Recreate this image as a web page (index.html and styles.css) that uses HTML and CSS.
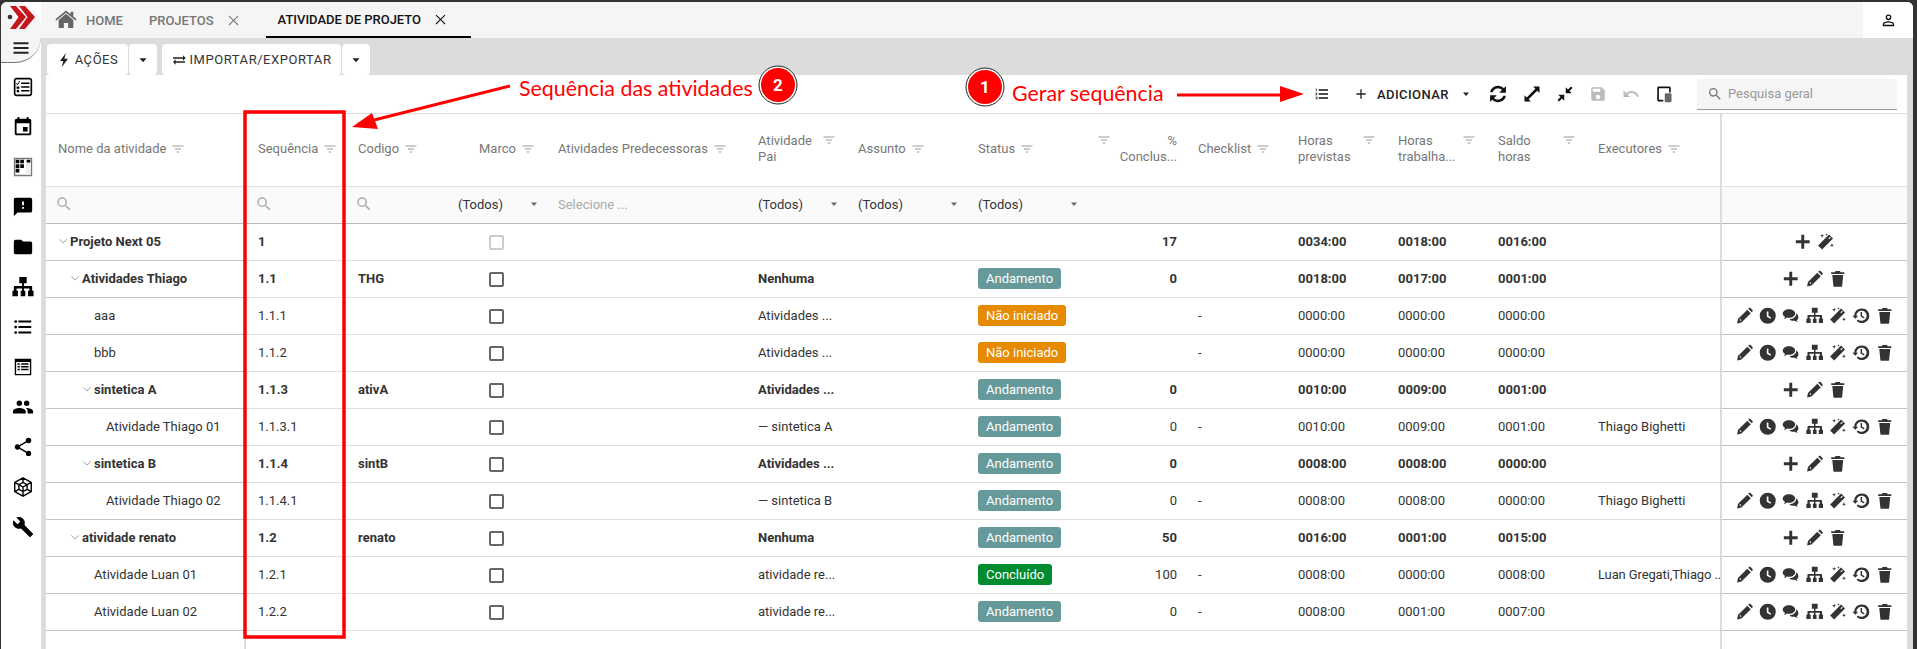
FILE: index.html
```html
<!DOCTYPE html>
<html lang="pt-BR">
<head>
    <meta charset="UTF-8">
    <meta name="viewport" content="width=device-width, initial-scale=1.0">
    <title>Atividade de Projeto</title>
    <link rel="stylesheet" href="styles.css">
</head>
<body>
    <!-- icon set -->
    <svg class="defs" aria-hidden="true">
        <symbol id="i-menu" viewBox="0 0 24 24"><path d="M3 19h18v-2.400H3zm0-5.800h18v-2.400H3zM3 5v2.400h18V5z"/></symbol>
        <symbol id="i-home" viewBox="0 0 24 24"><path d="M12 5.200 4 12v8c0 .4.3.7.7.7h5v-5.500h4.600v5.500h5c.4 0 .7-.3.7-.7v-8zM23.600 11.200 20 8.200V3h-3v2.700L12 1.600.4 11.200l1.200 1.400L12 4l10.400 8.600z"/></symbol>
        <symbol id="i-close" viewBox="0 0 24 24"><path d="M21 4.400 19.600 3 12 10.600 4.400 3 3 4.400 10.600 12 3 19.600 4.400 21 12 13.400 19.600 21 21 19.600 13.400 12z"/></symbol>
        <symbol id="i-flash" viewBox="0 0 24 24"><path d="M15 1 6 13.500h5L8.500 23 18 10h-5.500z"/></symbol>
        <symbol id="i-swap" viewBox="0 0 24 24"><path d="M7 11l-4 4 4 4v-3h14v-2H7zM22 9l-4-4v3H3v2h15v3z"/></symbol>
        <symbol id="i-numbered" viewBox="0 0 24 24"><path d="M2 17h2v.5H3v1h1v.5H2v1h3v-4H2zm1-9h1V4H2v1h1zm-1 3h1.800L2 13.100v.9h3v-1H3.200L5 10.900V10H2zm5-6v2h14V5zm0 14h14v-2H7zm0-6h14v-2H7z"/></symbol>
        <symbol id="i-add" viewBox="0 0 24 24"><path d="M19 13h-6v6h-2v-6H5v-2h6V5h2v6h6z"/></symbol>
        <symbol id="i-sync" viewBox="0 0 24 24"><path d="M12 2c2.800 0 5.300 1.100 7 3L21.500 2.500V10.500h-8L16.700 7.300A6.600 6.600 0 0 0 5.600 10H2.500A9.800 9.800 0 0 1 12 2zM2.500 13.500h8L7.300 16.700a6.600 6.600 0 0 0 11.100-2.700h3.100A9.800 9.800 0 0 1 5 19l-2.500 2.500z"/></symbol>
        <symbol id="i-expand" viewBox="0 0 24 24"><path d="M22 2h-8.500l3 3L5 16.500l-3-3V22h8.500l-3-3L19 7.500l3 3z"/></symbol>
        <symbol id="i-compress" viewBox="0 0 24 24"><path d="M13 3v8h8l-3-3 4-4-2-2-4 4zM11 21v-8H3l3 3-4 4 2 2 4-4z"/></symbol>
        <symbol id="i-save" viewBox="0 0 24 24"><path d="M17 3H5c-1.100 0-2 .9-2 2v14c0 1.100.9 2 2 2h14c1.100 0 2-.9 2-2V7zm-5 16c-1.700 0-3-1.300-3-3s1.300-3 3-3 3 1.300 3 3-1.300 3-3 3zm3-10H5V5h10z"/></symbol>
        <symbol id="i-undo" viewBox="0 0 24 24"><path d="M12.500 8c-2.650 0-5.050 1-6.900 2.600L2 7v9h9l-3.620-3.620c1.390-1.160 3.160-1.880 5.120-1.880 3.540 0 6.550 2.310 7.600 5.500l2.370-.78C21.080 11.030 17.150 8 12.500 8z"/></symbol>
        <symbol id="i-columns" viewBox="0 0 24 24"><path d="M5 2h14c1.100 0 2 .9 2 2v6h-2.200V4.200H5.200v15.600H11V22H5c-1.100 0-2-.9-2-2V4c0-1.100.9-2 2-2z"/><rect fill="#666" x="13" y="11" width="9" height="12" rx="1.500"/></symbol>
        <symbol id="i-search" viewBox="0 0 24 24"><path d="M15.500 14h-.79l-.28-.27A6.470 6.470 0 0 0 16 9.500 6.500 6.500 0 1 0 9.500 16c1.610 0 3.090-.59 4.230-1.570l.27.28v.79l5 4.990L20.490 19zm-6 0A4.490 4.490 0 0 1 5 9.500 4.490 4.490 0 0 1 9.500 5 4.490 4.490 0 0 1 14 9.500 4.490 4.490 0 0 1 9.500 14z"/></symbol>
        <symbol id="i-person" viewBox="0 0 24 24"><path d="M12 3.500a4 4 0 1 1 0 8 4 4 0 0 1 0-8zm0 1.900a2.100 2.100 0 1 0 0 4.200 2.100 2.100 0 0 0 0-4.200zM12 13c2.700 0 8 1.300 8 4v3H4v-3c0-2.700 5.300-4 8-4zm0 1.900c-3 0-6.100 1.500-6.100 2.100v1.100h12.200V17c0-.6-3.100-2.100-6.100-2.100z"/></symbol>
        <symbol id="i-filter" viewBox="0 0 24 24"><path d="M1 5h22v1.800H1zM6 11h12v1.800H6zM9.500 17h5v1.800h-5z"/></symbol>
        <symbol id="i-caret" viewBox="0 0 24 24"><path d="M6 9h12l-6 7z"/></symbol>
        <symbol id="i-chevron" viewBox="0 0 24 24"><path d="M3 8l9 9 9-9" fill="none" stroke="currentColor" stroke-width="2.200"/></symbol>
        <symbol id="i-checklist" viewBox="0 0 24 24"><path d="M5 2h14c1.700 0 3 1.300 3 3v14c0 1.700-1.300 3-3 3H5c-1.700 0-3-1.300-3-3V5c0-1.700 1.300-3 3-3zm0 1.800C4.300 3.800 3.800 4.300 3.800 5v14c0 .7.5 1.200 1.200 1.200h14c.7 0 1.200-.5 1.200-1.200V5c0-.7-.5-1.200-1.200-1.200z"/><path d="M10 7h9v1.800h-9zM10 11.100h9v1.800h-9zM10 15.200h9v1.800h-9zM5 7.500l1 1.200L8 5.500l.8.6-2.700 4L4.300 8.200zM5 11.500h3V14H5zM6.500 15a1.500 1.500 0 1 1 0 3 1.500 1.500 0 0 1 0-3z"/></symbol>
        <symbol id="i-event" viewBox="0 0 24 24"><path d="M17 12h-5v5h5zM16 1v2H8V1H6v2H5c-1.100 0-2 .9-2 2v14c0 1.100.9 2 2 2h14c1.100 0 2-.9 2-2V5c0-1.100-.9-2-2-2h-1V1zm3 18H5V8h14z"/></symbol>
        <symbol id="i-kanban" viewBox="0 0 24 24"><path fill="#777" d="M2 2h20v20H2z"/><path fill="#fff" d="M3.500 3.500h17v17h-17z"/><path fill="#eee" d="M15 3.500h5.500v17H15z"/><path d="M4 4h4v4H4zM9 4h4v4H9zM16 4h4v3h-4zM4 9h4v4H4zM9 9h4v4H9zM4 14h4v4H4z"/></symbol>
        <symbol id="i-sms" viewBox="0 0 24 24"><path d="M20 2H4C2.900 2 2 2.900 2 4v18l4-4h14c1.100 0 2-.9 2-2V4c0-1.100-.9-2-2-2zm-7 12h-2v-2h2zm0-4h-2V6h2z"/></symbol>
        <symbol id="i-folder" viewBox="0 0 24 24"><path d="M10 4H4C2.900 4 2 4.900 2 6v12c0 1.100.9 2 2 2h16c1.100 0 2-.9 2-2V8c0-1.100-.9-2-2-2h-8z"/></symbol>
        <symbol id="i-sitemap" viewBox="0 0 24 24"><path d="M8 1h8v7h-3v3h8c.6 0 1 .4 1 1v4h1.500v6h-6v-6H19v-2.500h-6V16h1.500v6h-5v-6H11v-2.500H5V16h1.500v6h-6v-6H2v-4c0-.6.4-1 1-1h8V8H8z"/></symbol>
        <symbol id="i-list" viewBox="0 0 24 24"><circle cx="4" cy="6" r="1.500"/><circle cx="4" cy="12" r="1.500"/><circle cx="4" cy="18" r="1.500"/><path d="M7 19h14v-2H7zm0-6h14v-2H7zm0-8v2h14V5z"/></symbol>
        <symbol id="i-listalt" viewBox="0 0 24 24"><path d="M3 3h18v18H3zm1.500 3.500v13h15v-13z"/><path d="M6 8h2.500v1.500H6zM10 8h8v1.500h-8zM6 11h2.500v1.500H6zM10 11h8v1.500h-8zM6 14h2.500v1.500H6zM10 14h8v1.500h-8z"/></symbol>
        <symbol id="i-people" viewBox="0 0 24 24"><path d="M16 11a3 3 0 1 0 0-6 3 3 0 0 0 0 6zm-8 0a3 3 0 1 0 0-6 3 3 0 0 0 0 6zm0 2c-2.330 0-7 1.170-7 3.500V19h14v-2.500c0-2.330-4.670-3.500-7-3.500zm8 0c-.29 0-.62.02-.97.05 1.160.84 1.970 1.970 1.970 3.450V19h6v-2.500c0-2.330-4.670-3.500-7-3.500z"/></symbol>
        <symbol id="i-share" viewBox="0 0 24 24"><path d="M18 16.080c-.76 0-1.440.3-1.960.77L8.910 12.700c.05-.23.09-.46.09-.7s-.04-.47-.09-.7l7.050-4.110c.54.5 1.250.81 2.040.81a3 3 0 1 0-3-3c0 .24.04.47.09.7L8.040 9.810A3 3 0 1 0 6 15c.79 0 1.500-.31 2.040-.81l7.120 4.160c-.05.21-.08.43-.08.65a2.920 2.920 0 1 0 2.920-2.920z"/></symbol>
        <symbol id="i-cube" viewBox="0 0 24 24"><path fill="none" stroke="currentColor" stroke-width="1.500" d="M12 2l9 5v10l-9 5-9-5V7zM12 2v5M3 7l4.500 2.500M21 7l-4.500 2.500M7.500 9.500 12 7l4.500 2.500v5L12 17l-4.500-2.500zM12 12l4.500-2.500M12 12 7.500 9.500M12 12v5M3 17l4.500-2.500M21 17l-4.500-2.500M12 22v-5"/></symbol>
        <symbol id="i-wrench" viewBox="0 0 24 24"><path d="M22.700 19l-9.100-9.100c.9-2.300.4-5-1.500-6.900-2-2-5-2.400-7.400-1.300L9 6 6 9 1.600 4.700C.4 7.100.9 10.100 2.900 12.100c1.900 1.900 4.600 2.400 6.900 1.500l9.100 9.100c.4.4 1 .4 1.400 0l2.300-2.300c.5-.4.5-1.100.1-1.400z"/></symbol>
        <symbol id="i-plus" viewBox="0 0 24 24"><path d="M10 2.500h4V10h7.500v4H14v7.500h-4V14H2.500v-4H10z"/></symbol>
        <symbol id="i-edit" viewBox="0 0 24 24"><path d="M1.500 22.500l1.200-6L15.500 3.700l4.800 4.800L7.500 21.300zM4.800 17.600l1.600 1.600 1-1-1.600-1.600zM16.800 2.400l1-1c.6-.6 1.500-.6 2.100 0l2.700 2.700c.6.600.6 1.500 0 2.100l-1 1z"/></symbol>
        <symbol id="i-clock" viewBox="0 0 24 24"><path fill-rule="evenodd" d="M12 1a11 11 0 1 1 0 22 11 11 0 0 1 0-22zm-1.300 5v7.200l5 3 1-1.800-3.800-2.300V6z"/></symbol>
        <symbol id="i-comments" viewBox="0 0 24 24"><path d="M9.500 3C4.800 3 1 5.700 1 9c0 1.900 1.300 3.600 3.200 4.700-.3 1-.9 1.900-1.700 2.700 1.700-.2 3.200-.9 4.400-1.900.8.200 1.700.3 2.600.3 4.700 0 8.500-2.700 8.500-6S14.200 3 9.500 3z"/><path d="M19.400 8.600c.1.400.1.700.1 1.100 0 3.700-4.100 6.800-9.200 7 1.100 1.400 3.100 2.300 5.400 2.300.7 0 1.300-.1 1.900-.2 1.100.9 2.400 1.500 4 1.700-.7-.7-1.200-1.500-1.500-2.400 1.500-.9 2.400-2.200 2.400-3.700 0-2.500-1.200-4.700-3.100-5.800z"/></symbol>
        <symbol id="i-magic" viewBox="0 0 24 24"><path d="M16.500 2 22 7.500 7 22.500 1.500 17zM15.500 7.500l1 1 2.500-2.500-1-1z"/><path d="M7 1l.8 2 2 .8-2 .8L7 6.600l-.8-2-2-.8 2-.8zM20.500 14l.8 2 2 .8-2 .8-.8 2-.8-2-2-.8 2-.8zM13 .5l.5 1.200 1.200.5-1.200.5L13 3.900l-.5-1.200-1.200-.5 1.200-.5z"/></symbol>
        <symbol id="i-history" viewBox="0 0 24 24"><path d="M13 2a10 10 0 0 0-10 10H.5l4 4.200 4-4.200H6a7 7 0 1 1 2.100 5l-1.700 1.700A10 10 0 1 0 13 2z"/><path d="M11.800 7v6l4.500 2.700 1-1.500-3.500-2.100V7z"/></symbol>
        <symbol id="i-trash" viewBox="0 0 24 24"><path d="M4.500 7h15L18 22c0 .6-.4 1-1 1H7c-.6 0-1-.4-1-1zM3 3h5l1-1.500h6L16 3h5v2.500H3z"/></symbol>
    </svg>

    <div class="app">
        <aside class="sidebar">
            <div class="brand">
                <svg class="logo" viewBox="0 0 28 25">
                    <circle cx="3" cy="12" r="2.300" fill="#333"/>
                    <path fill="#c4161c" d="M3 1h6l10 11L9 24H3l8.500-12z"/>
                    <path fill="#c4161c" d="M12 1h6l10 11-10 12h-6l8.500-12z"/>
                </svg>
                <svg class="ic-menu"><use href="#i-menu"/></svg>
            </div>
            <nav class="side-nav">
                <a><svg><use href="#i-checklist"/></svg></a>
                <a><svg><use href="#i-event"/></svg></a>
                <a><svg><use href="#i-kanban"/></svg></a>
                <a><svg><use href="#i-sms"/></svg></a>
                <a><svg><use href="#i-folder"/></svg></a>
                <a><svg><use href="#i-sitemap"/></svg></a>
                <a><svg><use href="#i-list"/></svg></a>
                <a><svg><use href="#i-listalt"/></svg></a>
                <a><svg><use href="#i-people"/></svg></a>
                <a><svg><use href="#i-share"/></svg></a>
                <a><svg><use href="#i-cube"/></svg></a>
                <a><svg><use href="#i-wrench"/></svg></a>
            </nav>
        </aside>

        <div class="main">
            <header class="tabs">
                <div class="tab tab-home"><svg class="ic-home"><use href="#i-home"/></svg>HOME</div>
                <div class="tab">PROJETOS<svg class="ic-x"><use href="#i-close"/></svg></div>
                <div class="tab tab-active">ATIVIDADE DE PROJETO<svg class="ic-x"><use href="#i-close"/></svg></div>
                <div class="account"><svg><use href="#i-person"/></svg></div>
            </header>

            <div class="content">
                <div class="actions">
                    <button class="btn btn-acoes"><svg><use href="#i-flash"/></svg>AÇÕES</button>
                    <button class="btn btn-caret"><svg><use href="#i-caret"/></svg></button>
                    <button class="btn btn-import"><svg><use href="#i-swap"/></svg>IMPORTAR/EXPORTAR</button>
                    <button class="btn btn-caret"><svg><use href="#i-caret"/></svg></button>
                </div>

                <div class="panel">
                    <div class="toolbar">
                        <svg class="tool tool-seq"><use href="#i-numbered"/></svg>
                        <div class="add"><svg><use href="#i-add"/></svg><span>ADICIONAR</span><svg class="add-caret"><use href="#i-caret"/></svg></div>
                        <svg class="tool tool-sync"><use href="#i-sync"/></svg>
                        <svg class="tool"><use href="#i-expand"/></svg>
                        <svg class="tool"><use href="#i-compress"/></svg>
                        <svg class="tool tool-off"><use href="#i-save"/></svg>
                        <svg class="tool tool-off"><use href="#i-undo"/></svg>
                        <svg class="tool"><use href="#i-columns"/></svg>
                        <div class="global-search"><svg><use href="#i-search"/></svg>Pesquisa geral</div>
                    </div>

                    <table class="grid">
                        <colgroup>
                            <col class="c-name"><col class="c-100"><col class="c-100"><col class="c-100"><col class="c-200"><col class="c-100"><col class="c-120"><col class="c-120"><col class="c-100"><col class="c-100"><col class="c-100"><col class="c-100"><col class="c-100"><col class="c-exec"><col class="c-act">
                        </colgroup>
                        <thead>
                            <tr class="head">
                                <th class="col-fixed"><div class="th"><span>Nome da atividade</span><svg><use href="#i-filter"/></svg></div></th>
                                <th><div class="th"><span>Sequência</span><svg><use href="#i-filter"/></svg></div></th>
                                <th><div class="th"><span>Codigo</span><svg><use href="#i-filter"/></svg></div></th>
                                <th><div class="th th-marco"><span>Marco</span><svg><use href="#i-filter"/></svg></div></th>
                                <th><div class="th"><span>Atividades Predecessoras</span><svg><use href="#i-filter"/></svg></div></th>
                                <th><div class="th th-wrap"><span>Atividade<br>Pai</span><svg><use href="#i-filter"/></svg></div></th>
                                <th><div class="th"><span>Assunto</span><svg><use href="#i-filter"/></svg></div></th>
                                <th><div class="th"><span>Status</span><svg><use href="#i-filter"/></svg></div></th>
                                <th><div class="th th-wrap th-pct"><svg><use href="#i-filter"/></svg><span>%<br>Conclus...</span></div></th>
                                <th><div class="th"><span>Checklist</span><svg><use href="#i-filter"/></svg></div></th>
                                <th><div class="th th-wrap"><span>Horas<br>previstas</span><svg><use href="#i-filter"/></svg></div></th>
                                <th><div class="th th-wrap"><span>Horas<br>trabalha...</span><svg><use href="#i-filter"/></svg></div></th>
                                <th><div class="th th-wrap"><span>Saldo<br>horas</span><svg><use href="#i-filter"/></svg></div></th>
                                <th><div class="th"><span>Executores</span><svg><use href="#i-filter"/></svg></div></th>
                                <th class="col-act"></th>
                            </tr>
                            <tr class="filters">
                                <td class="col-fixed"><svg class="f-search"><use href="#i-search"/></svg></td>
                                <td><svg class="f-search"><use href="#i-search"/></svg></td>
                                <td><svg class="f-search"><use href="#i-search"/></svg></td>
                                <td><div class="f-select">(Todos)<svg><use href="#i-caret"/></svg></div></td>
                                <td class="f-hint">Selecione ...</td>
                                <td><div class="f-select">(Todos)<svg><use href="#i-caret"/></svg></div></td>
                                <td><div class="f-select">(Todos)<svg><use href="#i-caret"/></svg></div></td>
                                <td><div class="f-select">(Todos)<svg><use href="#i-caret"/></svg></div></td>
                                <td></td><td></td><td></td><td></td><td></td><td></td>
                                <td class="col-act"></td>
                            </tr>
                        </thead>
                        <tbody>
                            <tr class="sum">
                                <td class="col-fixed"><div class="name lv0"><svg class="chev"><use href="#i-chevron"/></svg>Projeto Next 05</div></td>
                                <td>1</td><td></td>
                                <td class="mark"><span class="check check-off"></span></td>
                                <td></td><td></td><td></td><td></td>
                                <td class="pct">17</td><td></td>
                                <td>0034:00</td><td>0018:00</td><td>0016:00</td><td></td>
                                <td class="col-act"><div class="acts"><svg><use href="#i-plus"/></svg><svg><use href="#i-magic"/></svg></div></td>
                            </tr>
                            <tr class="sum">
                                <td class="col-fixed"><div class="name lv1"><svg class="chev"><use href="#i-chevron"/></svg>Atividades Thiago</div></td>
                                <td>1.1</td><td>THG</td>
                                <td class="mark"><span class="check"></span></td>
                                <td></td><td>Nenhuma</td><td></td>
                                <td><span class="badge b-run">Andamento</span></td>
                                <td class="pct">0</td><td></td>
                                <td>0018:00</td><td>0017:00</td><td>0001:00</td><td></td>
                                <td class="col-act"><div class="acts"><svg><use href="#i-plus"/></svg><svg><use href="#i-edit"/></svg><svg><use href="#i-trash"/></svg></div></td>
                            </tr>
                            <tr>
                                <td class="col-fixed"><div class="name lv2">aaa</div></td>
                                <td>1.1.1</td><td></td>
                                <td class="mark"><span class="check"></span></td>
                                <td></td><td>Atividades ...</td><td></td>
                                <td><span class="badge b-new">Não iniciado</span></td>
                                <td class="pct"></td><td>-</td>
                                <td>0000:00</td><td>0000:00</td><td>0000:00</td><td></td>
                                <td class="col-act"><div class="acts"><svg><use href="#i-edit"/></svg><svg><use href="#i-clock"/></svg><svg><use href="#i-comments"/></svg><svg><use href="#i-sitemap"/></svg><svg><use href="#i-magic"/></svg><svg><use href="#i-history"/></svg><svg><use href="#i-trash"/></svg></div></td>
                            </tr>
                            <tr>
                                <td class="col-fixed"><div class="name lv2">bbb</div></td>
                                <td>1.1.2</td><td></td>
                                <td class="mark"><span class="check"></span></td>
                                <td></td><td>Atividades ...</td><td></td>
                                <td><span class="badge b-new">Não iniciado</span></td>
                                <td class="pct"></td><td>-</td>
                                <td>0000:00</td><td>0000:00</td><td>0000:00</td><td></td>
                                <td class="col-act"><div class="acts"><svg><use href="#i-edit"/></svg><svg><use href="#i-clock"/></svg><svg><use href="#i-comments"/></svg><svg><use href="#i-sitemap"/></svg><svg><use href="#i-magic"/></svg><svg><use href="#i-history"/></svg><svg><use href="#i-trash"/></svg></div></td>
                            </tr>
                            <tr class="sum">
                                <td class="col-fixed"><div class="name lv2"><svg class="chev"><use href="#i-chevron"/></svg>sintetica A</div></td>
                                <td>1.1.3</td><td>ativA</td>
                                <td class="mark"><span class="check"></span></td>
                                <td></td><td>Atividades ...</td><td></td>
                                <td><span class="badge b-run">Andamento</span></td>
                                <td class="pct">0</td><td></td>
                                <td>0010:00</td><td>0009:00</td><td>0001:00</td><td></td>
                                <td class="col-act"><div class="acts"><svg><use href="#i-plus"/></svg><svg><use href="#i-edit"/></svg><svg><use href="#i-trash"/></svg></div></td>
                            </tr>
                            <tr>
                                <td class="col-fixed"><div class="name lv3">Atividade Thiago 01</div></td>
                                <td>1.1.3.1</td><td></td>
                                <td class="mark"><span class="check"></span></td>
                                <td></td><td>— sintetica A</td><td></td>
                                <td><span class="badge b-run">Andamento</span></td>
                                <td class="pct">0</td><td>-</td>
                                <td>0010:00</td><td>0009:00</td><td>0001:00</td><td>Thiago Bighetti</td>
                                <td class="col-act"><div class="acts"><svg><use href="#i-edit"/></svg><svg><use href="#i-clock"/></svg><svg><use href="#i-comments"/></svg><svg><use href="#i-sitemap"/></svg><svg><use href="#i-magic"/></svg><svg><use href="#i-history"/></svg><svg><use href="#i-trash"/></svg></div></td>
                            </tr>
                            <tr class="sum">
                                <td class="col-fixed"><div class="name lv2"><svg class="chev"><use href="#i-chevron"/></svg>sintetica B</div></td>
                                <td>1.1.4</td><td>sintB</td>
                                <td class="mark"><span class="check"></span></td>
                                <td></td><td>Atividades ...</td><td></td>
                                <td><span class="badge b-run">Andamento</span></td>
                                <td class="pct">0</td><td></td>
                                <td>0008:00</td><td>0008:00</td><td>0000:00</td><td></td>
                                <td class="col-act"><div class="acts"><svg><use href="#i-plus"/></svg><svg><use href="#i-edit"/></svg><svg><use href="#i-trash"/></svg></div></td>
                            </tr>
                            <tr>
                                <td class="col-fixed"><div class="name lv3">Atividade Thiago 02</div></td>
                                <td>1.1.4.1</td><td></td>
                                <td class="mark"><span class="check"></span></td>
                                <td></td><td>— sintetica B</td><td></td>
                                <td><span class="badge b-run">Andamento</span></td>
                                <td class="pct">0</td><td>-</td>
                                <td>0008:00</td><td>0008:00</td><td>0000:00</td><td>Thiago Bighetti</td>
                                <td class="col-act"><div class="acts"><svg><use href="#i-edit"/></svg><svg><use href="#i-clock"/></svg><svg><use href="#i-comments"/></svg><svg><use href="#i-sitemap"/></svg><svg><use href="#i-magic"/></svg><svg><use href="#i-history"/></svg><svg><use href="#i-trash"/></svg></div></td>
                            </tr>
                            <tr class="sum">
                                <td class="col-fixed"><div class="name lv1"><svg class="chev"><use href="#i-chevron"/></svg>atividade renato</div></td>
                                <td>1.2</td><td>renato</td>
                                <td class="mark"><span class="check"></span></td>
                                <td></td><td>Nenhuma</td><td></td>
                                <td><span class="badge b-run">Andamento</span></td>
                                <td class="pct">50</td><td></td>
                                <td>0016:00</td><td>0001:00</td><td>0015:00</td><td></td>
                                <td class="col-act"><div class="acts"><svg><use href="#i-plus"/></svg><svg><use href="#i-edit"/></svg><svg><use href="#i-trash"/></svg></div></td>
                            </tr>
                            <tr>
                                <td class="col-fixed"><div class="name lv2">Atividade Luan 01</div></td>
                                <td>1.2.1</td><td></td>
                                <td class="mark"><span class="check"></span></td>
                                <td></td><td>atividade re...</td><td></td>
                                <td><span class="badge b-done">Concluído</span></td>
                                <td class="pct">100</td><td>-</td>
                                <td>0008:00</td><td>0000:00</td><td>0008:00</td><td class="exec">Luan Gregati,Thiago ..</td>
                                <td class="col-act"><div class="acts"><svg><use href="#i-edit"/></svg><svg><use href="#i-clock"/></svg><svg><use href="#i-comments"/></svg><svg><use href="#i-sitemap"/></svg><svg><use href="#i-magic"/></svg><svg><use href="#i-history"/></svg><svg><use href="#i-trash"/></svg></div></td>
                            </tr>
                            <tr>
                                <td class="col-fixed"><div class="name lv2">Atividade Luan 02</div></td>
                                <td>1.2.2</td><td></td>
                                <td class="mark"><span class="check"></span></td>
                                <td></td><td>atividade re...</td><td></td>
                                <td><span class="badge b-run">Andamento</span></td>
                                <td class="pct">0</td><td>-</td>
                                <td>0008:00</td><td>0001:00</td><td>0007:00</td><td></td>
                                <td class="col-act"><div class="acts"><svg><use href="#i-edit"/></svg><svg><use href="#i-clock"/></svg><svg><use href="#i-comments"/></svg><svg><use href="#i-sitemap"/></svg><svg><use href="#i-magic"/></svg><svg><use href="#i-history"/></svg><svg><use href="#i-trash"/></svg></div></td>
                            </tr>
                            <tr class="filler">
                                <td class="col-fixed"></td>
                                <td colspan="13"></td>
                                <td class="col-act"></td>
                            </tr>
                        </tbody>
                    </table>
                </div>
            </div>
        </div>
    </div>

    <!-- red notes drawn over the screenshot -->
    <svg class="notes" viewBox="0 0 1917 649">
        <rect class="note-box" x="245" y="112" width="99" height="525"/>
        <path class="note-line" d="M510 86 370 121"/>
        <path class="note-head" d="M352 127 372 113 378 129z"/>
        <path class="note-line" d="M1177 95H1282"/>
        <path class="note-head" d="M1304 94 1280 86V102z"/>
        <circle class="note-ring" cx="778" cy="85" r="19"/>
        <circle class="note-dot" cx="778" cy="85" r="17"/>
        <text class="note-num" x="778" y="91">2</text>
        <circle class="note-ring" cx="985" cy="87" r="19"/>
        <circle class="note-dot" cx="985" cy="87" r="17"/>
        <text class="note-num" x="985" y="93">1</text>
    </svg>
    <span class="note-text note-seq">Sequência das atividades</span>
    <span class="note-text note-gen">Gerar sequência</span>
</body>
</html>
```

FILE: styles.css
```css
* {
    box-sizing: border-box;
}
html, body {
    height: 100%;
}
body {
    margin: 0;
    padding: 2px 4px 0 1px;
    overflow: hidden;
    background-color: #333;
    font-family: Roboto, Arial, sans-serif;
    font-size: 13px;
    color: #333;
}
svg {
    fill: currentColor;
}
.defs {
    display: none;
}

.app {
    display: flex;
    height: 647px;
    overflow: hidden;
    background-color: #fff;
    border-radius: 6px 6px 0 0;
}

/* sidebar */
.sidebar {
    width: 40px;
    flex-shrink: 0;
    color: #000;
}
.brand {
    height: 61px;
    background-color: #f5f5f5;
    border-bottom: 1px solid #777;
    border-radius: 0 26px 26px 0;
    display: flex;
    flex-direction: column;
    align-items: center;
    padding-top: 3px;
}
.logo {
    width: 28px;
    height: 25px;
}
.ic-menu {
    width: 20px;
    height: 20px;
    margin-top: 8px;
    color: #222;
}
.side-nav {
    padding-top: 4px;
}
.side-nav a {
    display: flex;
    justify-content: center;
    align-items: center;
    height: 40px;
    margin-left: 3px;
}
.side-nav svg {
    width: 22px;
    height: 22px;
}

/* tabs */
.main {
    flex: 1;
    min-width: 0;
    display: flex;
    flex-direction: column;
}
.tabs {
    display: flex;
    height: 36px;
    background-color: #f5f5f5;
    font-weight: 500;
    color: #777;
    flex-shrink: 0;
}
.tab {
    display: flex;
    align-items: center;
    height: 36px;
    padding-left: 26px;
}
.tab-home {
    padding-left: 14px;
}
.ic-home {
    width: 22px;
    height: 22px;
    margin-right: 9px;
    color: #666;
}
.ic-x {
    width: 13px;
    height: 13px;
    margin-left: 13px;
    margin-right: 37px;
}
.tab-active {
    padding-left: 12px;
    color: #111;
    margin-left: -11px;
    border-bottom: 2px solid #000;
}
.tab-active .ic-x {
    margin-left: 13px;
    margin-right: 24px;
    color: #111;
}
.account {
    margin-left: auto;
    width: 50px;
    background-color: #fff;
    display: flex;
    align-items: center;
    justify-content: center;
    color: #111;
}
.account svg {
    width: 17px;
    height: 17px;
}

/* gray area */
.content {
    flex: 1;
    background-color: #dcdcdc;
    padding-left: 5px;
    padding-right: 6px;
    min-height: 0;
}
.actions {
    display: flex;
    height: 37px;
    padding-top: 6px;
    padding-left: 1px;
}
.btn {
    display: flex;
    align-items: center;
    justify-content: center;
    height: 31px;
    padding: 0;
    border: 0;
    border-radius: 4px;
    background-color: #fff;
    font-family: inherit;
    font-size: 13px;
    letter-spacing: .55px;
    color: #333;
}
.btn svg {
    width: 16px;
    height: 16px;
    margin-right: 3px;
    color: #222;
}
.btn-acoes {
    width: 81px;
    padding-right: 1px;
}
.btn-caret {
    width: 28px;
    margin-left: 1px;
}
.btn-caret svg {
    margin: 0;
    width: 14px;
    height: 14px;
}
.btn-import {
    width: 179px;
    margin-left: 5px;
    padding-right: 1px;
}
.panel {
    background-color: #fff;
    height: 574px;
}

/* toolbar */
.toolbar {
    display: flex;
    align-items: center;
    justify-content: flex-end;
    height: 38px;
    padding-right: 10px;
    color: #111;
}
.tool {
    width: 18px;
    height: 18px;
    margin-left: 15px;
}
.tool-seq {
    width: 16px;
    height: 16px;
    margin-right: 23px;
}
.tool-sync {
    width: 20px;
    height: 20px;
    margin-left: 16px;
}
.tool-off {
    color: #bbb;
}
.add {
    display: flex;
    align-items: center;
    font-size: 13px;
    font-weight: 500;
    letter-spacing: .45px;
    color: #222;
}
.add svg {
    width: 16px;
    height: 16px;
    margin-right: 8px;
}
.add .add-caret {
    width: 12px;
    height: 12px;
    margin: 0 0 0 11px;
}
.global-search {
    display: flex;
    align-items: center;
    width: 200px;
    height: 31px;
    margin-left: 24px;
    padding-left: 10px;
    background-color: #f5f5f5;
    border-bottom: 1px solid #999;
    border-radius: 3px 3px 0 0;
    color: #999;
}
.global-search svg {
    width: 16px;
    height: 16px;
    margin-right: 5px;
    color: #777;
}

/* table */
.grid {
    width: 1861px;
    table-layout: fixed;
    border-collapse: separate;
    border-spacing: 0;
}
.c-name { width: 200px; }
.c-100 { width: 100px; }
.c-120 { width: 120px; }
.c-200 { width: 200px; }
.c-exec { width: 134px; }
.c-act { width: 187px; }

.grid th, .grid td {
    padding: 0 9px 2px 12px;
    white-space: nowrap;
    overflow: hidden;
    text-align: left;
    border-bottom: 1px solid #e0e0e0;
}
.head th {
    height: 74px;
    border-top: 1px solid #ddd;
    font-weight: 400;
    color: #777;
}
.th {
    display: flex;
    align-items: center;
    line-height: 16px;
}
.th svg {
    width: 12px;
    height: 12px;
    margin-left: 6px;
    color: #999;
    flex-shrink: 0;
}
.th-marco {
    padding-left: 21px;
}
.th-wrap {
    justify-content: space-between;
    align-items: flex-start;
    padding-right: 2px;
}
.th-wrap svg {
    margin-top: 1px;
}
.th-pct {
    padding-right: 0;
    text-align: right;
}
.th-pct svg {
    margin-left: 0;
}
.filters td {
    height: 37px;
    background-color: #fafafa;
    border-bottom: 1px solid #bbb;
}
.f-search {
    width: 18px;
    height: 18px;
    margin-left: -3px;
    vertical-align: middle;
    color: #aaa;
}
.f-select {
    display: flex;
    justify-content: space-between;
    align-items: center;
    margin-right: -3px;
}
.f-select svg {
    width: 12px;
    height: 12px;
    color: #666;
}
.f-hint {
    color: #aaa;
}
.grid tbody td {
    height: 37px;
}
.grid tbody .col-fixed, .grid tbody .col-act {
    border-bottom-color: #c4c4c4;
}
.sum td {
    font-weight: 700;
}
.col-fixed {
    border-right: 2px solid #ddd;
}
.grid .col-act {
    padding: 0;
    border-left: 2px solid #ddd;
}
.grid .exec {
    padding-right: 0;
    letter-spacing: -.12px;
}
.name {
    display: flex;
    align-items: center;
}
.chev {
    width: 10px;
    height: 10px;
    margin-right: 2px;
    color: #999;
    flex-shrink: 0;
}
.lv0 { padding-left: 12px; }
.lv1 { padding-left: 24px; }
.lv2 { padding-left: 36px; }
.lv3 { padding-left: 48px; }
.name .chev { margin-left: -12px; }
.grid tbody .mark {
    padding: 0;
    text-align: center;
}
.check {
    display: inline-block;
    width: 15px;
    height: 15px;
    vertical-align: middle;
    border: 2px solid #666;
    border-radius: 2px;
    background-color: #fff;
}
.check-off {
    border-color: #ccc;
}
.badge {
    display: inline-block;
    height: 21px;
    padding: 0 8px;
    line-height: 21px;
    border-radius: 3px;
    font-weight: 400;
    color: #fff;
}
.b-run { background-color: #669999; }
.b-new { background-color: #e68a00; }
.b-done { background-color: #008c2e; }
.grid tbody .pct {
    text-align: right;
}
.acts {
    display: flex;
    justify-content: center;
    align-items: center;
    gap: 5.8px;
}
.acts svg {
    width: 17.5px;
    height: 17.5px;
}
.grid .filler td {
    height: 18px;
    padding: 0;
    border-bottom: 0;
}

/* annotations on top of the screen */
.notes {
    position: absolute;
    left: 0;
    top: 0;
    width: 1917px;
    height: 649px;
    pointer-events: none;
}
.note-box {
    fill: none;
    stroke: #f00;
    stroke-width: 3.5;
}
.note-line {
    fill: none;
    stroke: #f00;
    stroke-width: 3;
}
.note-head {
    fill: #f00;
}
.note-ring {
    fill: #fff;
    stroke: #222;
    stroke-width: 1;
}
.note-dot {
    fill: #f00;
}
.note-num {
    fill: #fff;
    font-size: 17px;
    font-weight: 700;
    text-anchor: middle;
}
.note-text {
    position: absolute;
    color: #f00;
    font-family: Lato, sans-serif;
    font-size: 21.4px;
    line-height: 26px;
    white-space: nowrap;
}
.note-seq {
    left: 519px;
    top: 75px;
}
.note-gen {
    left: 1012px;
    top: 80px;
}
```
